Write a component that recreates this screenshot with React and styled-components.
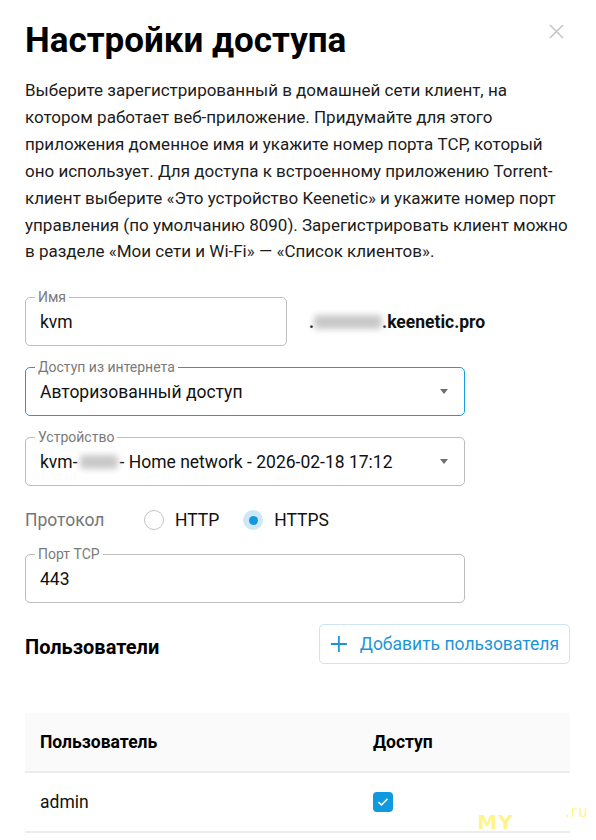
import React from "react";
import styled, { createGlobalStyle } from "styled-components";

const Global = createGlobalStyle`
  html, body { margin: 0; padding: 0; background: #fff; }
  body { font-family: Roboto, "Noto Sans", Arial, sans-serif; color: #1c1c1c; }
  * { box-sizing: border-box; }
`;

const Page = styled.div`
  position: relative;
  width: 596px;
  height: 840px;
  overflow: hidden;
  padding: 21px 26px 0 25px;
`;

const Header = styled.div`
  display: flex;
  justify-content: space-between;
  align-items: flex-start;
`;

const Title = styled.h1`
  margin: 0;
  font-size: 35px;
  line-height: 40px;
  font-weight: 700;
  color: #000;
`;

const CloseBtn = styled.button`
  border: 0;
  background: none;
  padding: 0;
  margin: 0 4px 0 0;
  width: 20px;
  height: 20px;
  display: flex;
  align-items: center;
  justify-content: center;
  cursor: pointer;
`;

const Intro = styled.p`
  margin: 16px 0 0;
  font-size: 17px;
  line-height: 26.9px;
  color: #1c1c1c;
`;

const Form = styled.div`
  margin-top: 32px;
  display: flex;
  flex-direction: column;
  gap: 21px;
`;

const Row = styled.div`
  display: flex;
  align-items: center;
  gap: 22px;
`;

const Field = styled.div`
  position: relative;
  width: ${(p) => p.$w}px;
  height: 49px;
  border: 1px solid ${(p) => (p.$focus ? "#169ee4" : "#bdbdbd")};
  border-radius: 5px;
  display: flex;
  align-items: center;
  padding: 0 14px;
  font-size: 17.5px;
  color: #111;
`;

const Legend = styled.span`
  position: absolute;
  top: -9px;
  left: 9px;
  padding: 0 3px;
  background: #fff;
  font-size: 14px;
  line-height: 16px;
  color: #7a7a7a;
`;

const Value = styled.span`
  flex: 1;
  white-space: nowrap;
  display: flex;
  align-items: center;
`;

const Blur = styled.span`
  display: inline-block;
  width: ${(p) => p.$w}px;
  height: 14px;
  margin: 0 ${(p) => p.$m || 0}px;
  background: #c8c8c8;
  filter: blur(3px);
  border-radius: 4px;
`;

const Arrow = styled.span`
  width: 0;
  height: 0;
  border-left: 4px solid transparent;
  border-right: 4px solid transparent;
  border-top: 5px solid #6f6f6f;
  margin-right: 2px;
`;

const Domain = styled.span`
  font-size: 17.5px;
  font-weight: 700;
  color: #111;
  display: flex;
  align-items: center;
`;

const Protocol = styled.div`
  display: flex;
  align-items: center;
  height: 26px;
  font-size: 17.5px;
`;

const ProtoLabel = styled.span`
  color: #767676;
  width: 119px;
`;

const RadioItem = styled.label`
  display: flex;
  align-items: center;
  gap: 11px;
  margin-right: 24px;
  color: #111;
`;

const Radio = styled.span`
  width: 20px;
  height: 20px;
  border-radius: 50%;
  display: flex;
  align-items: center;
  justify-content: center;
  border: ${(p) => (p.$on ? "none" : "1px solid #c4c4c4")};
  background: ${(p) => (p.$on ? "#cfe8f7" : "#fff")};
  &::after {
    content: "";
    display: ${(p) => (p.$on ? "block" : "none")};
    width: 9px;
    height: 9px;
    border-radius: 50%;
    background: #1499e0;
  }
`;

const UsersHead = styled.div`
  margin-top: 21px;
  display: flex;
  justify-content: space-between;
  align-items: center;
`;

const H2 = styled.h2`
  margin: 6px 0 0;
  font-size: 20px;
  font-weight: 700;
  color: #000;
`;

const AddBtn = styled.button`
  height: 40px;
  width: 251px;
  border: 1px solid #cde4f2;
  border-radius: 5px;
  background: #fff;
  display: flex;
  align-items: center;
  gap: 12px;
  padding: 0 10px;
  font-family: inherit;
  font-size: 17.5px;
  white-space: nowrap;
  color: #1c95d8;
  cursor: pointer;
`;

const Table = styled.div`
  margin-top: 49px;
`;

const TRow = styled.div`
  display: grid;
  grid-template-columns: 333px 1fr;
  align-items: center;
  height: 60px;
  padding-left: 15px;
  border-bottom: 2px solid #ececec;
  background: ${(p) => (p.$head ? "#fafafa" : "#fff")};
  font-size: 17.5px;
  font-weight: ${(p) => (p.$head ? 700 : 400)};
  color: ${(p) => (p.$head ? "#000" : "#111")};
`;

const Check = styled.span`
  width: 20px;
  height: 20px;
  border-radius: 4px;
  background: #0f99df;
  display: flex;
  align-items: center;
  justify-content: center;
`;

const Watermark = styled.div`
  position: absolute;
  left: 477px;
  top: 810px;
  font-family: "DejaVu Sans", sans-serif;
  font-weight: 700;
  font-size: 20px;
  color: #fff27a;
  opacity: 0.85;
  letter-spacing: 1px;
  & span {
    position: absolute;
    left: 88px;
    top: -7px;
    font-size: 15px;
    font-weight: 400;
  }
`;

export default function App() {
  return (
    <Page>
      <Global />
      <Header>
        <Title>Настройки доступа</Title>
        <CloseBtn aria-label="close">
          <svg width="15" height="15" viewBox="0 0 15 15">
            <path d="M1 1L14 14M14 1L1 14" stroke="#c6c6c6" strokeWidth="1.6" />
          </svg>
        </CloseBtn>
      </Header>
      <Intro>
        Выберите зарегистрированный в домашней сети клиент, на котором работает
        веб-приложение. Придумайте для этого приложения доменное имя и укажите
        номер порта TCP, который оно использует. Для доступа к встроенному
        приложению Torrent-клиент выберите «Это устройство Keenetic» и укажите
        номер порт управления (по умолчанию 8090). Зарегистрировать клиент можно
        в разделе «Мои сети и Wi-Fi» — «Список клиентов».
      </Intro>
      <Form>
        <Row>
          <Field $w={262}>
            <Legend>Имя</Legend>
            <Value>kvm</Value>
          </Field>
          <Domain>
            .<Blur $w={68} />.keenetic.pro
          </Domain>
        </Row>
        <Field $w={440} $focus>
          <Legend>Доступ из интернета</Legend>
          <Value>Авторизованный доступ</Value>
          <Arrow />
        </Field>
        <Field $w={440}>
          <Legend>Устройство</Legend>
          <Value>
            kvm-<Blur $w={38} $m={2} /> - Home network - 2026-02-18 17:12
          </Value>
          <Arrow />
        </Field>
        <Protocol>
          <ProtoLabel>Протокол</ProtoLabel>
          <RadioItem>
            <Radio />
            HTTP
          </RadioItem>
          <RadioItem>
            <Radio $on />
            HTTPS
          </RadioItem>
        </Protocol>
        <Field $w={440}>
          <Legend>Порт TCP</Legend>
          <Value>443</Value>
        </Field>
      </Form>
      <UsersHead>
        <H2>Пользователи</H2>
        <AddBtn>
          <svg width="20" height="20" viewBox="0 0 20 20">
            <path d="M10 1V19M1 10H19" stroke="#1c95d8" strokeWidth="2" />
          </svg>
          Добавить пользователя
        </AddBtn>
      </UsersHead>
      <Table>
        <TRow $head>
          <span>Пользователь</span>
          <span>Доступ</span>
        </TRow>
        <TRow>
          <span>admin</span>
          <Check>
            <svg width="12" height="10" viewBox="0 0 12 10">
              <path d="M1.5 5.2L4.5 8L10.5 1.8" stroke="#fff" strokeWidth="1.6" fill="none" />
            </svg>
          </Check>
        </TRow>
      </Table>
      <Watermark>
        MY<span>.ru</span>
      </Watermark>
    </Page>
  );
}
